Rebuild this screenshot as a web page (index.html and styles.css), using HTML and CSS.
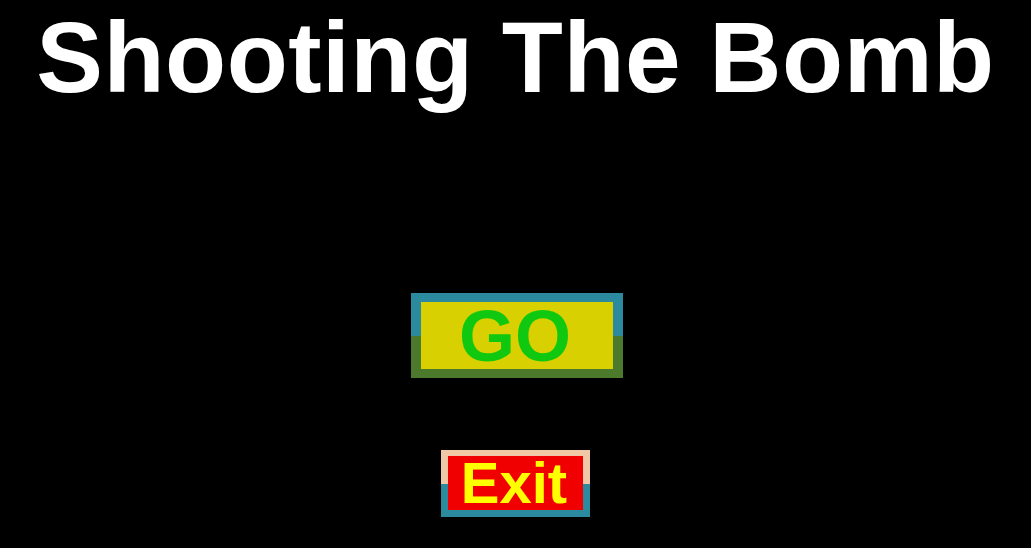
FILE: index.html
```html
<!DOCTYPE html>
<html>
<head>
<meta charset="utf-8">
<link rel="stylesheet" href="styles.css">
</head>
<body>
<div class="screen">
  <h1 class="title">Shooting The Bomb</h1>
  <div class="btn btn-go"><div class="btn-face go-face">GO</div></div>
  <div class="btn btn-exit"><div class="btn-face exit-face">Exit</div></div>
</div>
</body>
</html>
```
FILE: styles.css
```css
html, body {
  margin: 0;
  padding: 0;
  background: #000;
  width: 1031px;
  height: 548px;
  overflow: hidden;
}
.screen {
  display: flex;
  flex-direction: column;
  align-items: center;
  font-family: "Liberation Sans", Arial, sans-serif;
  font-weight: bold;
}
.title {
  margin: 0;
  color: #fff;
  font-size: 100px;
  line-height: 112px;
  height: 112px;
  padding-top: 1px;
  box-sizing: border-box;
  letter-spacing: 0.5px;
  font-weight: bold;
  white-space: nowrap;
}
.btn {
  box-sizing: border-box;
}
.btn-go {
  margin-top: 181px;
  margin-left: 3px;
  width: 212px;
  height: 85px;
  padding: 9px 10px 9px 10px;
  background: linear-gradient(to bottom, #2b8a9e 0, #2b8a9e 43px, #4b7a2c 43px, #4b7a2c 100%);
}
.btn-exit {
  margin-top: 72px;
  width: 149px;
  height: 67px;
  padding: 6px 7px 7px 7px;
  background: linear-gradient(to bottom, #f0c8a6 0, #f0c8a6 34px, #2b8a9e 34px, #2b8a9e 100%);
}
.btn-face {
  width: 100%;
  height: 100%;
  display: flex;
  justify-content: center;
}
.go-face {
  background: #d8d000;
  color: #10c810;
  font-size: 72px;
  line-height: 67px;
  padding-top: 1px;
  padding-right: 4px;
  box-sizing: border-box;
}
.exit-face {
  background: #f00000;
  color: #ffff00;
  font-size: 58px;
  line-height: 54px;
  padding-right: 3px;
  box-sizing: border-box;
}
```
